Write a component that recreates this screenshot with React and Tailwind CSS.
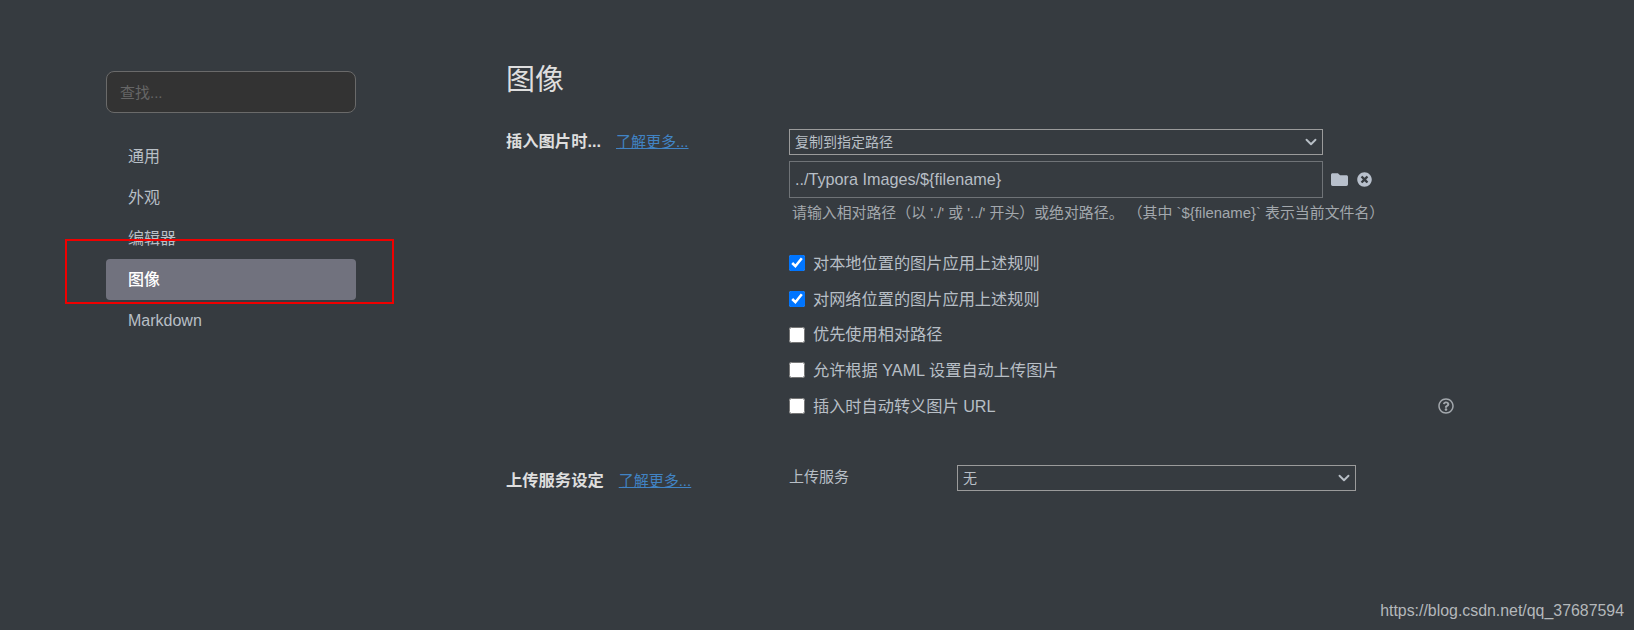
import React from 'react';
import { FaFolder, FaTimesCircle, FaRegQuestionCircle } from 'react-icons/fa';
import { ChevronDown } from 'lucide-react';

const FONT = "font-['Liberation_Sans','Noto_Sans_CJK_SC',sans-serif]";

const navItems = ['通用', '外观', '编辑器', '图像', 'Markdown'];

const checks = [
  { label: '对本地位置的图片应用上述规则', checked: true },
  { label: '对网络位置的图片应用上述规则', checked: true },
  { label: '优先使用相对路径', checked: false },
  { label: '允许根据 YAML 设置自动上传图片', checked: false },
  { label: '插入时自动转义图片 URL', checked: false },
];

const Select = ({ value, className }) => (
  <div className={`relative ${className}`}>
    <select
      defaultValue={value}
      className="w-full h-[26px] appearance-none border border-[#9b9b9b] bg-[#363b40] pl-[5px] text-[14px] leading-[24px] text-[#b8bfc6] outline-none"
    >
      <option>{value}</option>
    </select>
    <ChevronDown className="absolute right-[3px] top-[4px] w-[18px] h-[18px] text-[#b8bfc6] pointer-events-none" strokeWidth={2.5} />
  </div>
);

const App = () => {
  return (
    <div className={`${FONT} relative flex w-[1634px] h-[630px] overflow-hidden bg-[#363b40] text-[#b8bfc6]`}>
      {/* Sidebar */}
      <aside className="w-[250px] ml-[106px] mr-[150px] pt-[71px] shrink-0">
        <input
          placeholder="查找..."
          className="w-full h-[42px] rounded-[8px] border border-[#6a6a6a] bg-[#333333] px-[13px] text-[15px] text-[#b8bfc6] placeholder:text-[#666666] outline-none"
        />
        <nav className="mt-[23px] flex flex-col">
          {navItems.map((item) => (
            <div
              key={item}
              className={`h-[41px] rounded-[4px] pl-[22px] text-[16px] leading-[41px] ${
                item === '图像' ? 'bg-[#71727e] text-white font-medium' : 'text-[#b8bfc6]'
              }`}
            >
              {item}
            </div>
          ))}
        </nav>
      </aside>

      {/* Annotation box */}
      <div className="absolute left-[65px] top-[239px] w-[329px] h-[65px] border-2 border-[#f00000]" />

      {/* Settings */}
      <main className="flex-1 pt-[60px]">
        <h1 className="text-[29px] leading-[41px] text-[#dedede] font-normal">图像</h1>

        <section className="mt-[28px] flex">
          <div className="w-[283px] shrink-0 flex items-baseline">
            <span className="text-[16.3px] font-bold text-[#dedede] whitespace-nowrap">插入图片时...</span>
            <a className="ml-[15px] text-[15px] text-[#4183c4] underline whitespace-nowrap">了解更多...</a>
          </div>
          <div className="w-[640px]">
            <Select value="复制到指定路径" className="w-[534px]" />
            <div className="mt-[6px] flex items-center">
              <input
                defaultValue="../Typora Images/${filename}"
                className="w-[534px] h-[37px] border border-[#6f7377] bg-[#363b40] px-[5px] text-[16.2px] text-[#b8bfc6] outline-none"
              />
              <FaFolder className="ml-[8px] w-[17px] h-[17px] text-[#b8c0cc]" />
              <FaTimesCircle className="ml-[9px] w-[15px] h-[15px] text-[#b8c0cc]" />
            </div>
            <p className="mt-[5px] pl-[3px] text-[14.9px] leading-[20px] text-[#a3a8ad] whitespace-nowrap">
              请输入相对路径（以 './' 或 '../' 开头）或绝对路径。 （其中 `${'{'}filename{'}'}` 表示当前文件名）
            </p>
            <div className="relative mt-[30px] flex flex-col gap-[15.75px]">
              {checks.map((c) => (
                <label key={c.label} className="flex items-center h-[20px] text-[16.2px]">
                  <input type="checkbox" defaultChecked={c.checked} className="w-4 h-4 accent-[#0075ff]" />
                  <span className="ml-[8px] whitespace-nowrap">{c.label}</span>
                </label>
              ))}
              <FaRegQuestionCircle className="absolute left-[649px] bottom-[2px] w-4 h-4 text-[#a3a8ad]" />
            </div>
          </div>
        </section>

        <section className="mt-[48px] flex items-center">
          <div className="w-[283px] shrink-0 flex items-baseline pt-[4px]">
            <span className="text-[16.3px] font-bold text-[#dedede] whitespace-nowrap">上传服务设定</span>
            <a className="ml-[15px] text-[15px] text-[#4183c4] underline whitespace-nowrap">了解更多...</a>
          </div>
          <span className="w-[168px] pb-[2px] text-[15px] text-[#b8bfc6]">上传服务</span>
          <Select value="无" className="w-[399px]" />
        </section>
      </main>

      {/* Watermark */}
      <span className="absolute right-[10px] bottom-[7px] text-[15.9px] text-[#b4b8bb]">https://blog.csdn.net/qq_37687594</span>
    </div>
  );
};

export default App;
